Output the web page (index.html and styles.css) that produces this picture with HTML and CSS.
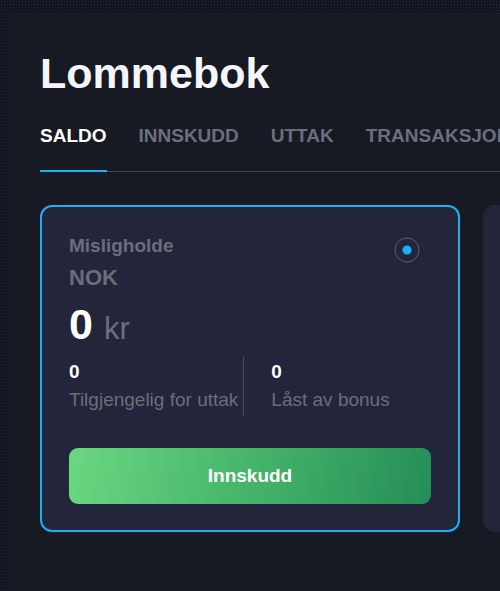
FILE: index.html
```html
<!DOCTYPE html>
<html lang="nb">
<head>
  <meta charset="UTF-8" />
  <meta name="viewport" content="width=device-width, initial-scale=1.0"/>
  <title>Lommebok</title>
  <link rel="stylesheet" href="styles.css">
</head>
<body>
  <div class="frame">
    <div class="wallet">
      <h1>Lommebok</h1>
      <div class="tabs">
        <span class="tab active">SALDO</span>
        <span class="tab">INNSKUDD</span>
        <span class="tab">UTTAK</span>
        <span class="tab">TRANSAKSJONER</span>
      </div>

      <div class="cards">
        <div class="card selected">
          <div class="card-head">
            <div>
              <div class="card-name">Misligholde</div>
              <div class="card-currency">NOK</div>
            </div>
            <svg class="radio" width="26" height="26" viewBox="0 0 26 26">
              <circle cx="13" cy="13" r="12" fill="none" stroke="#5d6072" stroke-width="1"/>
              <circle cx="13" cy="13" r="4.5" fill="#1ab0f5"/>
            </svg>
          </div>
          <div class="balance"><span class="amount">0</span><span class="unit">kr</span></div>
          <div class="stats">
            <div class="stat">
              <div class="stat-value">0</div>
              <div class="stat-label">Tilgjengelig for uttak</div>
            </div>
            <div class="stat">
              <div class="stat-value">0</div>
              <div class="stat-label">Låst av bonus</div>
            </div>
          </div>
          <button class="deposit">Innskudd</button>
        </div>
        <div class="card"></div>
      </div>
    </div>
  </div>
</body>
</html>
```

FILE: styles.css
```css
html, body { margin: 0; background: #131621; }
body { font-family: "Liberation Sans", Arial, sans-serif; }

.frame {
  height: 591px;
  box-sizing: border-box;
  padding: 14px 0 0 7px;
  background-color: #131621;
  background-image: radial-gradient(circle, #1f2a3e 0.8px, transparent 1px);
  background-size: 3px 3px;
  overflow: hidden;
}
.wallet {
  height: 100%;
  background: #171923;
  padding: 0 0 0 33px;
  overflow: hidden;
}

h1 { margin: 0; padding-top: 34px; font-size: 43px; line-height: 50px; color: #f4f6fb; font-weight: 700; }

.tabs {
  display: flex;
  gap: 32px;
  margin-top: 27px;
  border-bottom: 1px solid #444656;
  white-space: nowrap;
}
.tab { font-size: 19px; font-weight: 700; color: #6c6e7e; line-height: 22px; padding-bottom: 23px; }
.tab.active { color: #fff; border-bottom: 2px solid #1ab0f5; margin-bottom: -1px; }

.cards { display: flex; gap: 23px; margin-top: 33px; }
.card {
  flex: 0 0 420px;
  box-sizing: border-box;
  height: 327px;
  background: #23253a;
  border: 2px solid #23253a;
  border-radius: 12px;
  padding: 28px 27px 0 27px;
}
.card.selected { border-color: #1ab0f5; }

.card-head { display: flex; justify-content: space-between; align-items: flex-start; }
.card-name { font-size: 19px; font-weight: 700; color: #6b6d7d; line-height: 22px; }
.card-currency { font-size: 22px; font-weight: 700; color: #6b6d7d; line-height: 26px; margin-top: 8px; }
.radio { margin: 2px 11px 0 0; }

.balance { display: flex; align-items: baseline; gap: 11px; margin-top: 8px; }
.amount { font-size: 43px; font-weight: 700; color: #fff; line-height: 50px; }
.unit { font-size: 31px; color: #6b6d7d; }

.stats { display: flex; margin-top: 7px; }
.stat { padding-top: 6px; }
.stat:first-child { padding-right: 5px; border-right: 1px solid #4a4c5c; }
.stat + .stat { padding-left: 27px; }
.stat-value { font-size: 19px; font-weight: 700; color: #fff; line-height: 20px; }
.stat-label { font-size: 19px; color: #6b6d7d; line-height: 26px; margin-top: 5px; padding-bottom: 3px; }

.deposit {
  display: block;
  width: 100%;
  height: 56px;
  margin-top: 32px;
  border: 0;
  border-radius: 9px;
  background: linear-gradient(100deg, #6bd781 0%, #49b86c 45%, #258e57 100%);
  color: #fff;
  font-family: inherit;
  font-size: 19px;
  font-weight: 700;
}
```
